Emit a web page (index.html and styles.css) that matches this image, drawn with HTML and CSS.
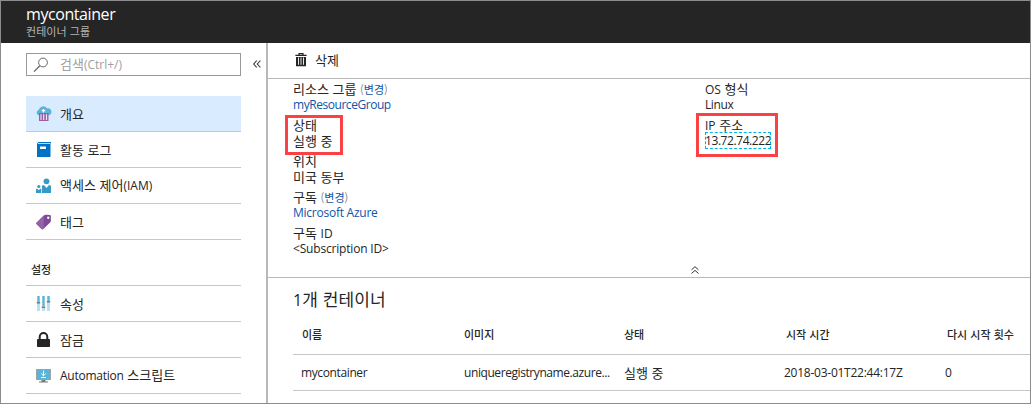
FILE: index.html
```html
<!DOCTYPE html>
<html lang="ko">
<head>
<meta charset="utf-8">
<title>mycontainer</title>
<link rel="stylesheet" href="styles.css">
</head>
<body>
<div class="blade">
  <header class="blade-header">
    <h1 class="blade-title">mycontainer</h1>
    <p class="blade-subtitle">컨테이너 그룹</p>
  </header>
  <div class="blade-body">
    <nav class="sidebar">
      <div class="search-row">
        <div class="search-box">
          <svg class="search-icon" width="16" height="16" viewBox="0 0 16 16" fill="none" stroke="#666"><circle cx="10" cy="5.5" r="4.4"/><path d="M6.8 8.8 1 14.6" stroke-width="1.3"/></svg>
          <span class="search-text">검색<span class="en">(Ctrl+/)</span></span>
        </div>
        <svg class="collapse-icon" width="8" height="8" viewBox="0 0 8 8" fill="none" stroke="#333" stroke-width="1.1"><path d="M3.8.5.7 4l3.1 3.5M7.4.5 4.3 4l3.1 3.5"/></svg>
      </div>
      <ul class="menu">
        <li class="menu-item active">
          <svg class="menu-icon" width="16" height="16" viewBox="0 0 16 16"><path d="M3 9.500A2.900 2.900 0 0 1 2.600 3.900 4.700 4.700 0 0 1 11 2.300a3.700 3.700 0 0 1 1.700 7.200z" fill="#59b4d9"/><path d="M7.500 6.500V3M5.700 4.600h3.600" stroke="#fff" stroke-width="1.300" fill="none"/><path d="M3 7h9.500v8H3z" fill="#9a5fab"/><path d="M5 8.300v5.600M7.700 8.300v5.600M10.500 8.300v5.600" stroke="#f3e9f6" stroke-width="1.100"/></svg>
          <span>개요</span>
        </li>
        <li class="menu-item">
          <svg class="menu-icon" width="16" height="16" viewBox="0 0 16 16"><path d="M1 1.500 2.500 0H15v13.500L14 15H1z" fill="#0072c6"/><path d="M2 1h12v1H2z" fill="#b8dbf2"/><path d="M14 1h1v12.500l-1 1z" fill="#7fb9e3"/><path d="M4 4.500h6V7H4z" fill="#fff"/></svg>
          <span>활동 로그</span>
        </li>
        <li class="menu-item">
          <svg class="menu-icon" width="16" height="16" viewBox="0 0 16 16" fill="#3999c6"><circle cx="10.500" cy="3.300" r="2.900"/><path d="M6 15V8.200Q6 7.200 7 7.200h1.200l2.300 2.900 2.300-2.900H14q1 0 1 1V15z"/><circle cx="2.800" cy="8.500" r="1.600"/><path d="M0 15v-3.700q0-.6.6-.6h.8l1.400 1.600 1.300-1.600h1.200V15z"/></svg>
          <span>액세스 제어<span class="en iam">(IAM)</span></span>
        </li>
        <li class="menu-item">
          <svg class="menu-icon" width="16" height="16" viewBox="0 0 16 16"><path d="M.5 8.800 7.800 1.500Q9 .6 10.500.7l3.300.3q1.100.1 1.100 1.200v4.200q0 1.200-.8 2L7.300 15q-1 .7-1.800-.1L.5 10q-.6-.6 0-1.200z" fill="#804998"/><path d="M.5 8.800 7.800 1.500v13L7.300 15q-1 .7-1.800-.1L.5 10q-.6-.6 0-1.200z" fill="#9561a8"/><circle cx="12.300" cy="3.700" r="1.200" fill="#fff"/></svg>
          <span>태그</span>
        </li>
      </ul>
      <h2 class="menu-heading">설정</h2>
      <ul class="menu">
        <li class="menu-item">
          <svg class="menu-icon" width="16" height="16" viewBox="0 0 16 16"><path d="M1 0h3v15H1zM6 0h3v15H6zM11 0h3v15h-3z" fill="#b9dff0"/><path d="M1.500 0h2v6h-2zM6.500 0h2v10h-2zM11.500 0h2v5h-2z" fill="#59b4d9"/><path d="M.8 6h3.400v1.400H.8zM5.800 10.500h3.400v1.400H5.800zM10.800 5h3.400v1.400h-3.400z" fill="#7a7a7a"/></svg>
          <span>속성</span>
        </li>
        <li class="menu-item">
          <svg class="menu-icon" width="16" height="16" viewBox="0 0 16 16"><path d="M3.700 7V4.900a3.800 3.800 0 0 1 7.600 0V7" fill="none" stroke="#252525" stroke-width="2"/><rect x="1" y="7" width="13" height="8" rx=".8" fill="#252525"/></svg>
          <span>잠금</span>
        </li>
        <li class="menu-item">
          <svg class="menu-icon" width="16" height="16" viewBox="0 0 16 16"><path d="M0 1h15v11H0z" fill="#a0a1a2"/><path d="M1 2h13v9H1z" fill="#59b4d9"/><path d="M5.500 12h4v1.500H12v1H3v-1h2.500z" fill="#7a7a7a"/><path d="M7.500 2.500v5M5.200 5.500l2.300 2.300 2.300-2.300M5 9.500h5" stroke="#fff" fill="none"/></svg>
          <span><span class="en automation">Automation</span> 스크립트</span>
        </li>
      </ul>
    </nav>
    <main class="content">
      <div class="toolbar">
        <svg class="trash-icon" width="12" height="14" viewBox="0 0 12 14"><path d="M4 2V.7h4V2" fill="none" stroke="#252525" stroke-width="1.200"/><path d="M.4 1.800h11.200v1.300H.4zM1 4h10v9.300H1z" fill="#252525"/><path d="M3.500 4.500v7.300M6 4.500v7.300M8.500 4.500v7.300" stroke="#fff" stroke-width=".9"/></svg>
        <span>삭제</span>
      </div>
      <section class="essentials">
        <dl class="properties">
          <div class="property"><dt>리소스 그룹 <small>(<a>변경</a>)</small></dt><dd class="en link rg">myResourceGroup</dd></div>
          <div class="property marked status"><dt>상태</dt><dd>실행 중</dd></div>
          <div class="property"><dt>위치</dt><dd>미국 동부</dd></div>
          <div class="property"><dt>구독 <small>(<a>변경</a>)</small></dt><dd class="en link azure">Microsoft Azure</dd></div>
          <div class="property"><dt>구독 <span class="en">ID</span></dt><dd class="en sub">&lt;Subscription ID&gt;</dd></div>
        </dl>
        <dl class="properties">
          <div class="property"><dt><span class="en">OS</span> 형식</dt><dd class="en linux">Linux</dd></div>
          <div class="property marked address"><dt><span class="en">IP</span> 주소</dt><dd class="en"><span class="focused">13.72.74.222</span></dd></div>
        </dl>
      </section>
      <div class="essentials-toggle">
        <svg width="8" height="8" viewBox="0 0 8 8" fill="none" stroke="#333"><path d="M.5 3.800 4 .7l3.500 3.100M.5 7.500 4 4.400l3.500 3.100"/></svg>
      </div>
      <section class="containers">
        <h2 class="containers-title"><span class="en count">1</span>개 컨테이너</h2>
        <div class="table">
          <div class="table-row table-head"><span>이름</span><span>이미지</span><span>상태</span><span>시작 시간</span><span>다시 시작 횟수</span></div>
          <div class="table-row"><span class="en name">mycontainer</span><span class="en image">uniqueregistryname.azure...</span><span>실행 중</span><span class="en time">2018-03-01T22:44:17Z</span><span class="en">0</span></div>
        </div>
      </section>
    </main>
  </div>
</div>
</body>
</html>
```
FILE: styles.css
```css
*, *::before { box-sizing: border-box; }
body { margin: 0; background: #fff; color: #252525; font: 13px/16px "Noto Sans CJK KR", sans-serif; }
h1, h2, p, ul, dl, dd { margin: 0; padding: 0; font-weight: 400; }
ul { list-style: none; }
.en { font-family: "Open Sans", "Noto Sans CJK KR", sans-serif; font-size: 12px; }

.blade { width: 1031px; height: 404px; border: 1px solid #8c8c8c; display: flex; flex-direction: column; overflow: hidden; }
.blade-header { height: 42px; padding: 4px 25px 0; background: #252525; color: #fff; }
.blade-title { font: 16px/18px "Open Sans", sans-serif; letter-spacing: -.42px; }
.blade-subtitle { font-size: 11px; line-height: 16px; color: #b5b5b5; letter-spacing: .05px; }
.blade-body { flex: 1; display: flex; min-height: 0; }

.sidebar { width: 267px; padding: 10px 0 0 25px; border-right: 2px solid #b8b8b8; }
.search-row { display: flex; align-items: center; gap: 12px; height: 23px; }
.search-box { width: 215px; height: 23px; border: 1px solid #999; display: flex; align-items: center; padding-left: 6px; color: #a0a0a0; }
.search-icon { margin-right: 11px; }
.collapse-icon { position: relative; top: -1px; }
.menu { width: 215px; }
.search-row + .menu { margin-top: 20px; }
.menu-item { height: 36px; border-bottom: 1px solid #c8c8c8; display: flex; align-items: center; padding-left: 10px; }
.menu-icon { margin-right: 8px; }
.menu-item.active { background: #d9ecff; }
.menu-heading { height: 46px; padding: 21px 0 0 5px; width: 215px; border-bottom: 1px solid #c8c8c8; font-size: 11px; font-weight: 500; line-height: 16px; }
.automation { letter-spacing: -.25px; }

.content { flex: 1; min-width: 0; }
.toolbar { height: 36px; border-bottom: 1px solid #b8b8b8; display: flex; align-items: center; padding: 0 0 2px 27px; gap: 8px; }
.trash-icon { margin-top: 1px; }
.essentials { display: grid; grid-template-columns: 412px 1fr; padding: 2px 0 0 25px; height: 183px; }
.property { height: 36px; position: relative; }
dt { height: 16px; }
dd { height: 16px; line-height: 15px; }
dd.en { line-height: 16px; }
small { font-size: 11px; color: #888; }
.link, small a { color: #0f55a8; }
.rg { letter-spacing: -.45px; }
.azure { letter-spacing: -.25px; }
.sub { letter-spacing: -.18px; }
.linux { letter-spacing: -.4px; }
.marked::before { content: ""; position: absolute; border: 3px solid #fa4244; }
.status::before { left: -8px; top: -2px; width: 58px; height: 40px; }
.address::before { left: -9px; top: -4px; width: 82px; height: 44px; }
.focused { display: inline-block; height: 17px; line-height: 17px; margin-top: -1px; letter-spacing: -.42px; outline: 1px dashed #00b4e8; outline-offset: -1px; }
.essentials-toggle { height: 16px; border-bottom: 1px solid #b8b8b8; padding: 4px 0 0 423px; line-height: 0; }

.containers { padding: 11px 0 0 25px; }
.containers-title { font-size: 17px; line-height: 20px; letter-spacing: .1px; }
.count { font-size: 16px; }
.table { margin-top: 4px; }
.table-row { display: grid; grid-template-columns: 163px 160px 160px 161px 1fr; height: 36px; align-items: center; padding-left: 8px; border-bottom: 1px solid #c8c8c8; }
.table-head { height: 41px; font-size: 11px; font-weight: 500; padding-left: 9px; grid-template-columns: 162px 160px 162px 161px 1fr; }
.name { letter-spacing: -.38px; }
.image { letter-spacing: -.42px; }
.time { letter-spacing: -.25px; }
```
